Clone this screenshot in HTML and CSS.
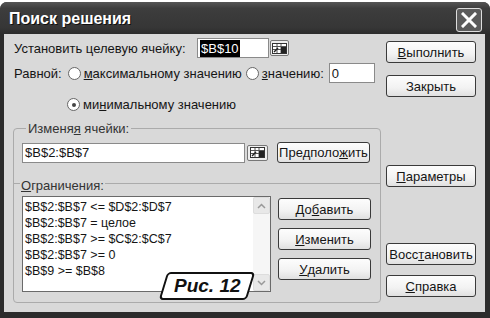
FILE: index.html
```html
<!DOCTYPE html>
<html lang="ru">
<head>
    <meta charset="UTF-8">
    <title>Поиск решения</title>
    <link rel="stylesheet" href="styles.css">
</head>
<body>
<div class="window">
    <div class="titlebar">
        <span class="title">Поиск решения</span>
        <span class="close-btn">
            <svg width="16" height="16" viewBox="0 0 16 16"><path d="M2 2 L14 14 M14 2 L2 14" stroke="#fff" stroke-width="3" stroke-linecap="square"/></svg>
        </span>
    </div>

    <div class="client">
        <div class="main">
            <div class="row row-target">
                <span class="target-label">Установить целевую ячейку:</span>
                <div class="field target-field"><span class="selected">$B$10</span></div>
                <span class="ref-btn">
                    <svg width="15" height="11" viewBox="0 0 15 11"><rect x="0.5" y="0.5" width="14" height="10" fill="#fff" stroke="#333"/><path d="M1 3.5 H14 M1 6.5 H14 M5 1 V10 M9 1 V10" stroke="#555"/><rect x="9" y="4" width="5" height="6" fill="#222"/><path d="M2 9 L6 5" stroke="#222" stroke-width="1.5"/></svg>
                </span>
            </div>

            <div class="row row-equal">
                <span>Равной:</span>
                <span class="radio max"><span class="circle"></span><u>м</u>аксимальному значению</span>
                <span class="radio val"><span class="circle"></span><u>з</u>начению:</span>
                <div class="field value-field">0</div>
            </div>

            <div class="row row-min">
                <span class="radio"><span class="circle checked"></span>ми<u>н</u>имальному значению</span>
            </div>

            <fieldset class="group">
                <legend>Изменя<u>я</u> ячейки:</legend>
                <div class="row row-changing">
                    <div class="field changing-field">$B$2:$B$7</div>
                    <span class="ref-btn">
                        <svg width="15" height="11" viewBox="0 0 15 11"><rect x="0.5" y="0.5" width="14" height="10" fill="#fff" stroke="#333"/><path d="M1 3.5 H14 M1 6.5 H14 M5 1 V10 M9 1 V10" stroke="#555"/><rect x="9" y="4" width="5" height="6" fill="#222"/><path d="M2 9 L6 5" stroke="#222" stroke-width="1.5"/></svg>
                    </span>
                    <span class="btn guess-btn">Предполо<u>ж</u>ить</span>
                </div>

                <div class="divider"><span><u>О</u>граничения:</span></div>

                <div class="constraints">
                    <div class="listbox">
                        <div class="items">
                            <div>$B$2:$B$7 &lt;= $D$2:$D$7</div>
                            <div>$B$2:$B$7 = целое</div>
                            <div>$B$2:$B$7 &gt;= $C$2:$C$7</div>
                            <div>$B$2:$B$7 &gt;= 0</div>
                            <div>$B$9 &gt;= $B$8</div>
                        </div>
                        <div class="scrollbar">
                            <span class="arrow"><svg width="9" height="6" viewBox="0 0 9 6"><path d="M1 5 L4.5 1.5 L8 5" fill="none" stroke="#999" stroke-width="1.5"/></svg></span>
                            <span class="track"></span>
                            <span class="arrow"><svg width="9" height="6" viewBox="0 0 9 6"><path d="M1 1 L4.5 4.5 L8 1" fill="none" stroke="#999" stroke-width="1.5"/></svg></span>
                        </div>
                    </div>
                    <div class="side-buttons">
                        <span class="btn">До<u>б</u>авить</span>
                        <span class="btn"><u>И</u>зменить</span>
                        <span class="btn"><u>У</u>далить</span>
                    </div>
                </div>
            </fieldset>
        </div>

        <div class="actions">
            <span class="btn btn-run"><u>В</u>ыполнить</span>
            <span class="btn btn-close">Закрыть</span>
            <span class="btn btn-params"><u>П</u>араметры</span>
            <span class="btn btn-reset">Восс<u>т</u>ановить</span>
            <span class="btn btn-help"><u>С</u>правка</span>
        </div>
    </div>

    <div class="caption"><span>Рис. 12</span></div>
</div>
</body>
</html>
```

FILE: styles.css
```css
body {
    margin: 0;
    padding: 0;
    width: 490px;
    height: 318px;
    background: #fff;
    font-family: 'Liberation Sans', Arial, sans-serif;
    font-size: 13px;
    color: #151515;
    overflow: hidden;
}

.window {
    position: relative;
    margin-top: 2px;
    width: 490px;
    height: 316px;
    background: #2c2c2c;
    border-radius: 7px 7px 0 0;
    display: flex;
    flex-direction: column;
}

/* Заголовок окна */
.titlebar {
    height: 32px;
    display: flex;
    align-items: center;
    justify-content: space-between;
    padding: 0 8px 0 9px;
    background: linear-gradient(180deg, #555 0%, #3d3d3d 20%, #363636 80%, #2c2c2c 100%);
    border-radius: 7px 7px 0 0;
}

.title {
    color: #fff;
    font-weight: bold;
    font-size: 16px;
    margin-top: 2px;
    text-shadow: 1px 1px 0 #111;
}

.close-btn {
    width: 24px;
    height: 22px;
    border: 1.5px solid #ddd;
    border-radius: 3px;
    background: #5c5c5c;
    display: flex;
    align-items: center;
    justify-content: center;
    margin-top: 4px;
}

.client {
    flex: 1;
    margin: 0 5px 6px 4px;
    background: #d9d9d9;
    display: flex;
}

.main {
    width: 368px;
    padding-left: 9px;
}

.row {
    display: flex;
    align-items: center;
    white-space: nowrap;
}

.row-target {
    margin-top: 4px;
    height: 20px;
    padding-left: 1px;
}

.target-label {
    width: 183px;
}

.field {
    background: #fff;
    border: 1px solid #8a8a8a;
    box-sizing: border-box;
    height: 20px;
    display: flex;
    align-items: center;
    padding-left: 2px;
}

.target-field {
    width: 72px;
}

.selected {
    background: #000;
    color: #fff;
    padding: 1px 1px;
}

.ref-btn {
    width: 19px;
    height: 16px;
    box-sizing: border-box;
    border: 1px solid #777;
    border-radius: 2px;
    background: #eee;
    display: flex;
    align-items: center;
    justify-content: center;
    margin-left: 1px;
}

.row-equal {
    margin-top: 5px;
    height: 20px;
    padding-left: 1px;
}

.radio {
    display: flex;
    align-items: center;
}

.circle {
    width: 13px;
    height: 13px;
    box-sizing: border-box;
    border: 1px solid #666;
    border-radius: 50%;
    background: #fff;
    margin-right: 3px;
    position: relative;
}

.circle.checked::after {
    content: '';
    position: absolute;
    left: 3.5px;
    top: 3.5px;
    width: 4px;
    height: 4px;
    border-radius: 50%;
    background: #444;
}

.radio.max {
    margin-left: 6px;
}

.radio.val {
    margin-left: 4px;
}

.value-field {
    width: 46px;
    margin-left: 5px;
}

.row-min {
    margin-top: 14px;
    padding-left: 54px;
}

/* Группа */
.group {
    margin: 9px 0 0 0;
    padding: 0 0 10px 8px;
    border: 1px solid #ababab;
    border-radius: 4px;
    width: 358px;
}

.group legend {
    padding: 0 2px;
    margin-left: 4px;
    color: #333;
}

.row-changing {
    margin-top: 6px;
}

.changing-field {
    width: 223px;
}

.row-changing .ref-btn {
    width: 21px;
    margin-left: 2px;
}

.btn {
    display: flex;
    align-items: center;
    justify-content: center;
    box-sizing: border-box;
    height: 22px;
    border: 1px solid #3a3a3a;
    border-radius: 3px;
    background: linear-gradient(180deg, #fdfdfd 0%, #f2f2f2 60%, #e0e0e0 100%);
}

.guess-btn {
    width: 93px;
    height: 21px;
    margin-left: 9px;
}

.divider {
    position: relative;
    height: 14px;
    margin: 15px 0 0 -8px;
}

.divider::before {
    content: '';
    position: absolute;
    left: 0;
    right: 0;
    top: 5px;
    border-top: 1px solid #ababab;
}

.divider span {
    position: relative;
    background: #d9d9d9;
    margin-left: 6px;
    padding: 0 1px;
    color: #333;
}

.constraints {
    display: flex;
    margin-top: 4px;
}

.listbox {
    width: 249px;
    height: 96px;
    box-sizing: border-box;
    border: 1px solid #6a6a6a;
    background: #fff;
    display: flex;
}

.items {
    flex: 1;
    padding: 2px 0 0 2px;
    font-size: 12.5px;
    line-height: 16px;
}

.scrollbar {
    width: 17px;
    display: flex;
    flex-direction: column;
    background: #f6f6f6;
}

.arrow {
    height: 17px;
    display: flex;
    align-items: center;
    justify-content: center;
    background: #e8e8e8;
    border: 1px solid #ddd;
    border-radius: 2px;
    box-sizing: border-box;
}

.track {
    flex: 1;
}

.side-buttons {
    display: flex;
    flex-direction: column;
    gap: 8px;
    margin: 2px 0 0 7px;
}

.side-buttons .btn {
    width: 93px;
}

/* Кнопки справа */
.actions {
    display: flex;
    flex-direction: column;
    margin-left: 5px;
    padding-top: 7px;
}

.actions .btn {
    width: 90px;
}

.btn-close {
    margin-top: 12px;
}

.btn-params {
    margin-top: 68px;
}

.btn-reset {
    margin-top: 56px;
}

.btn-help {
    margin-top: 10px;
}

/* Подпись рисунка */
.caption {
    position: absolute;
    left: 163px;
    top: 270px;
    width: 88px;
    height: 28px;
    box-sizing: border-box;
    border: 2px solid #111;
    border-radius: 4px;
    background: #fff;
    transform: skewX(-17deg);
    display: flex;
    align-items: center;
    justify-content: center;
}

.caption span {
    transform: skewX(17deg);
    font-family: 'Liberation Sans', sans-serif;
    font-weight: bold;
    font-style: italic;
    font-size: 19px;
    color: #111;
}
```
